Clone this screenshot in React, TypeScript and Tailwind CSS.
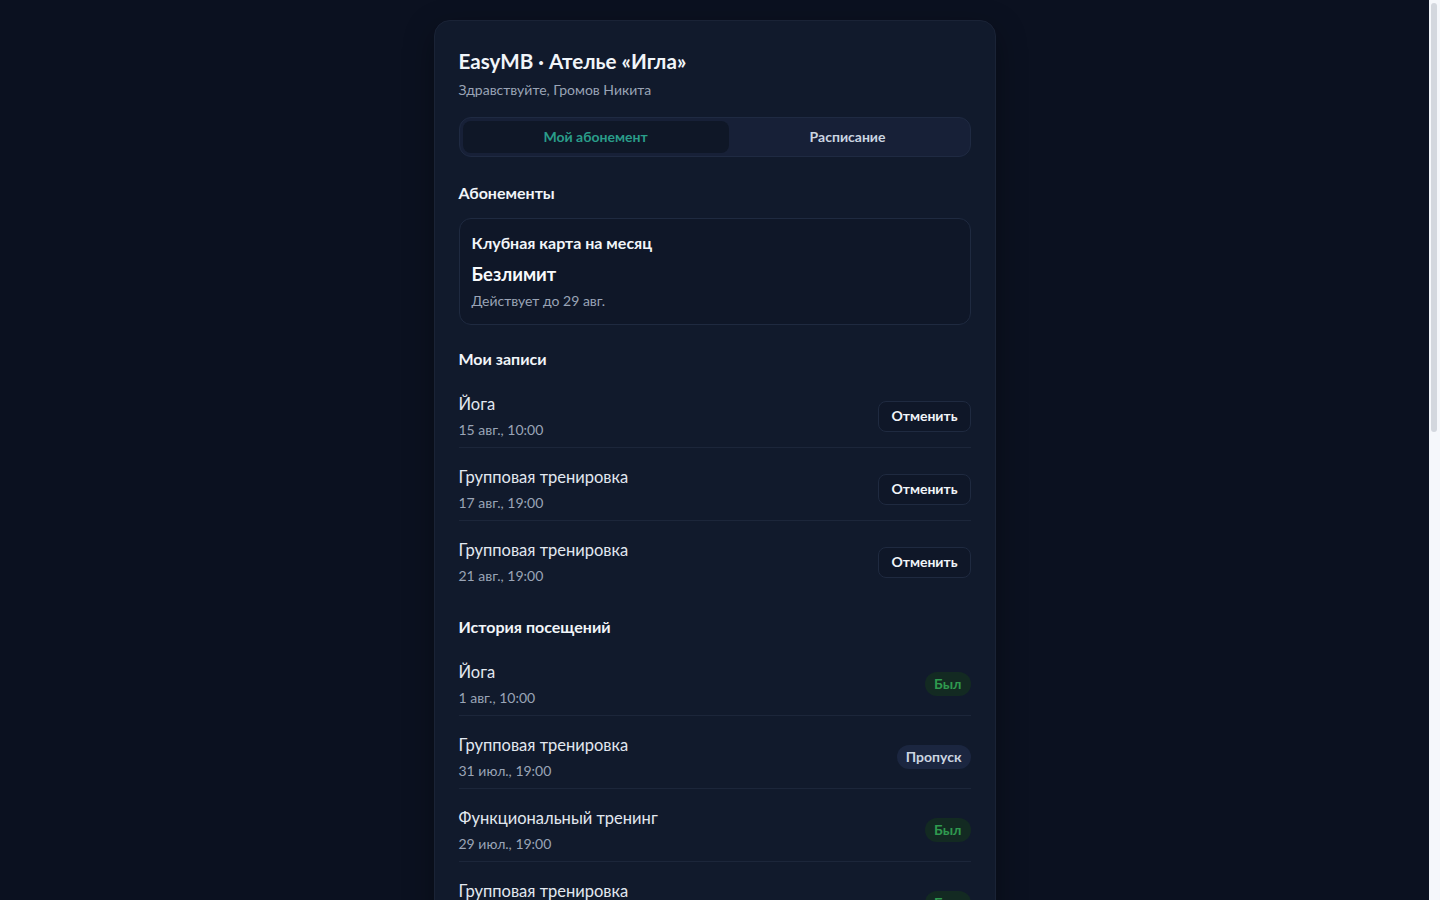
import React from "react";

type Rec = { title: string; date: string };
type Hist = { title: string; date: string; status: "was" | "miss" };

const records: Rec[] = [
  { title: "Йога", date: "15 авг., 10:00" },
  { title: "Групповая тренировка", date: "17 авг., 19:00" },
  { title: "Групповая тренировка", date: "21 авг., 19:00" },
];

const history: Hist[] = [
  { title: "Йога", date: "1 авг., 10:00", status: "was" },
  { title: "Групповая тренировка", date: "31 июл., 19:00", status: "miss" },
  { title: "Функциональный тренинг", date: "29 июл., 19:00", status: "was" },
  { title: "Групповая тренировка", date: "27 июл., 19:00", status: "was" },
  { title: "Йога", date: "25 июл., 10:00", status: "was" },
  { title: "Групповая тренировка", date: "24 июл., 19:00", status: "was" },
  { title: "Функциональный тренинг", date: "22 июл., 19:00", status: "miss" },
  { title: "Йога", date: "18 июл., 10:00", status: "was" },
  { title: "Групповая тренировка", date: "17 июл., 19:00", status: "was" },
  { title: "Функциональный тренинг", date: "15 июл., 19:00", status: "was" },
  { title: "Йога", date: "11 июл., 10:00", status: "was" },
  { title: "Групповая тренировка", date: "10 июл., 19:00", status: "miss" },
  { title: "Функциональный тренинг", date: "8 июл., 19:00", status: "was" },
  { title: "Йога", date: "4 июл., 10:00", status: "was" },
  { title: "Групповая тренировка", date: "3 июл., 19:00", status: "was" },
];

function Row({
  title,
  date,
  right,
  last,
}: {
  title: string;
  date: string;
  right: React.ReactNode;
  last?: boolean;
}) {
  return (
    <div
      className={
        "flex items-center justify-between pt-[17px] pb-[7px] " +
        (last ? "" : "border-b border-[#1c263a]")
      }
    >
      <div className="flex flex-col">
        <div className="text-[16.5px] leading-6 text-[#e2e8f0]">{title}</div>
        <div className="mt-[4px] text-sm leading-5 text-[#9aa4b6]">{date}</div>
      </div>
      {right}
    </div>
  );
}

export default function App() {
  return (
    <div
      className="flex bg-[#0b1120]"
      style={{ fontFamily: "Lato, Inter, 'Noto Sans', sans-serif" }}
    >
      <div className="min-h-screen flex-1 pt-5 pb-5">
        <div className="mx-auto w-[562px] rounded-2xl border border-[#1a2336] bg-[#111a2c] px-6 pt-[26px] pb-6 shadow-[0_10px_30px_rgba(0,0,0,0.35)]">
          <h1 className="text-[20.6px] font-bold leading-7 text-[#f1f5f9]">
            EasyMB · Ателье «Игла»
          </h1>
          <div className="mt-[5px] text-sm leading-5 text-[#9aa4b6]">
            Здравствуйте, Громов Никита
          </div>

          <div className="mt-[17px] flex rounded-xl border border-[#1f2a42] bg-[#172037] p-[3px]">
            <button className="flex-auto rounded-lg bg-[#0f1727] py-[6px] text-sm font-bold leading-5 text-[#2a9d8a]">
              Мой абонемент
            </button>
            <button className="flex-auto rounded-lg py-[6px] text-sm font-bold leading-5 text-[#cbd5e1]">
              Расписание
            </button>
          </div>

          <h2 className="mt-[24px] text-base font-bold leading-6 text-[#f1f5f9]">
            Абонементы
          </h2>
          <div className="mt-[13px] rounded-xl border border-[#1f2a40] bg-[#0f1728] px-3 py-[13px]">
            <div className="text-base font-bold leading-[22px] text-[#f1f5f9]">
              Клубная карта на месяц
            </div>
            <div className="mt-[6px] text-[18.4px] font-bold leading-7 text-[#f8fafc]">
              Безлимит
            </div>
            <div className="mt-[3px] text-sm leading-5 text-[#9aa4b6]">
              Действует до 29 авг.
            </div>
          </div>

          <h2 className="mt-[22px] text-base font-bold leading-6 text-[#f1f5f9]">
            Мои записи
          </h2>
          <div className="mt-[4px] flex flex-col">
            {records.map((r, i) => (
              <Row
                key={i}
                title={r.title}
                date={r.date}
                last={i === records.length - 1}
                right={
                  <button className="h-[31px] rounded-lg border border-[#1f2a40] bg-[#0f1728] px-3 text-sm font-bold text-[#f1f5f9]">
                    Отменить
                  </button>
                }
              />
            ))}
          </div>

          <h2 className="mt-[22px] text-base font-bold leading-6 text-[#f1f5f9]">
            История посещений
          </h2>
          <div className="mt-[4px] flex flex-col">
            {history.map((h, i) => (
              <Row
                key={i}
                title={h.title}
                date={h.date}
                last={i === history.length - 1}
                right={
                  h.status === "was" ? (
                    <span className="rounded-full bg-[#132a22] px-[9px] py-[2px] text-sm font-bold leading-5 text-[#2f9a4f]">
                      Был
                    </span>
                  ) : (
                    <span className="rounded-full bg-[#1b2640] px-[9px] py-[2px] text-sm font-bold leading-5 text-[#cbd5e1]">
                      Пропуск
                    </span>
                  )
                }
              />
            ))}
          </div>
        </div>
      </div>
      <div className="flex h-[900px] w-[11px] shrink-0 flex-col bg-[#f5f7fb] px-[2px] pt-[3px]">
        <div className="h-[429px] w-[6px] rounded-full bg-[#d3d7de]" />
      </div>
    </div>
  );
}
